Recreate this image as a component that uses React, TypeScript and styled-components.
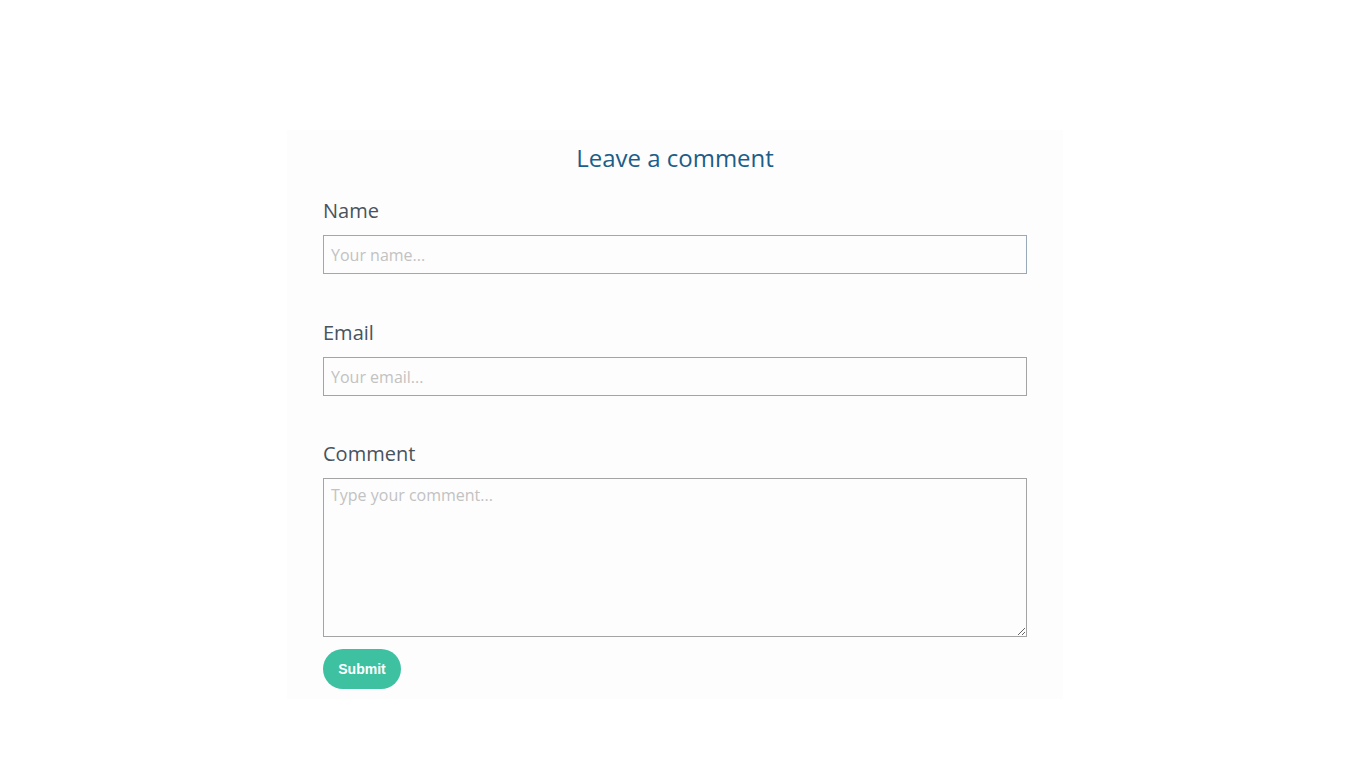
import styled, { createGlobalStyle } from "styled-components";

const GlobalStyle = createGlobalStyle`
  body {
    margin: 0;
    background: #ffffff;
    font-family: "Open Sans", "Noto Sans", sans-serif;
  }
`;

const Page = styled.div`
  padding-top: 130px;
`;

const Card = styled.form`
  display: flex;
  flex-direction: column;
  width: 776px;
  box-sizing: border-box;
  margin-left: calc(50% - 396px);
  padding: 11px 36px 10px;
  background: #fdfdfd;
`;

const Title = styled.h2`
  margin: 0 0 23px;
  font-size: 24px;
  line-height: 33px;
  font-weight: 400;
  color: #1b5e8a;
  text-align: center;
`;

const Field = styled.div<{ $space: number }>`
  display: flex;
  flex-direction: column;
  margin-bottom: ${({ $space }) => $space}px;
`;

const Label = styled.label`
  font-size: 20px;
  line-height: 27px;
  color: #48535e;
  margin-bottom: 11px;
`;

const Input = styled.input<{ $tint?: string }>`
  height: 39px;
  box-sizing: border-box;
  border: 1px solid ${({ $tint }) => $tint || "#a4a4a4"};
  background: #fdfdfd;
  padding: 0 7px;
  font-family: "Open Sans", "Noto Sans", sans-serif;
  font-size: 16px;
  color: #333;
  outline: none;
  &::placeholder {
    color: #c2c2c2;
  }
`;

const TextArea = styled.textarea`
  height: 159px;
  box-sizing: border-box;
  border: 1px solid #a4a4a4;
  background: #fdfdfd;
  padding: 5px 7px;
  font-family: "Open Sans", "Noto Sans", sans-serif;
  font-size: 16px;
  line-height: 22px;
  color: #333;
  outline: none;
  &::placeholder {
    color: #c2c2c2;
  }
`;

const SubmitButton = styled.button`
  align-self: flex-start;
  width: 78px;
  height: 40px;
  border: none;
  border-radius: 20px;
  background: #3ec1a1;
  color: #ffffff;
  font-family: "Liberation Sans", Arial, sans-serif;
  font-weight: bold;
  font-size: 14px;
  cursor: pointer;
`;

const App = () => {
  return (
    <Page>
      <GlobalStyle />
      <Card onSubmit={(e) => e.preventDefault()}>
        <Title>Leave a comment</Title>
        <Field $space={45}>
          <Label htmlFor="name">Name</Label>
          <Input id="name" placeholder="Your name..." $tint="#9aa9b8" />
        </Field>
        <Field $space={44}>
          <Label htmlFor="email">Email</Label>
          <Input id="email" placeholder="Your email..." />
        </Field>
        <Field $space={12}>
          <Label htmlFor="comment">Comment</Label>
          <TextArea id="comment" placeholder="Type your comment..." />
        </Field>
        <SubmitButton type="submit">Submit</SubmitButton>
      </Card>
    </Page>
  );
};

export default App;
